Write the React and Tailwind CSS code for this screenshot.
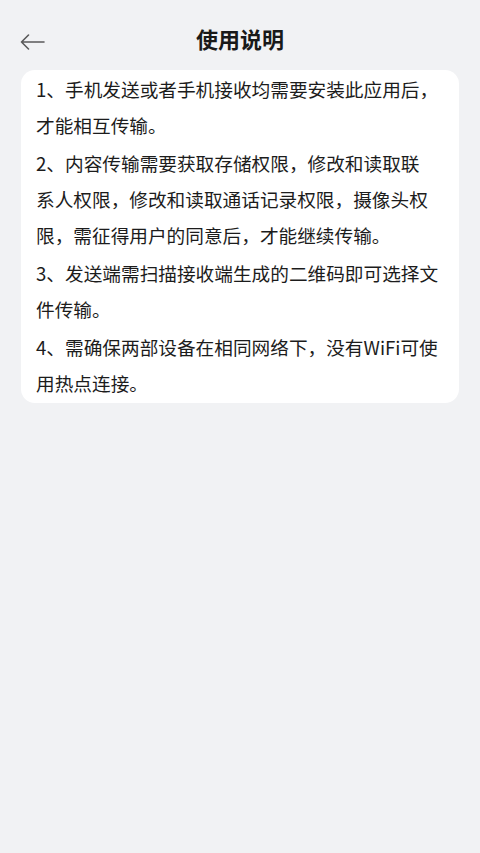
import React from "react";

const paragraphs = [
  ["1、手机发送或者手机接收均需要安装此应用后，", "才能相互传输。"],
  [
    "2、内容传输需要获取存储权限，修改和读取联",
    "系人权限，修改和读取通话记录权限，摄像头权",
    "限，需征得用户的同意后，才能继续传输。",
  ],
  ["3、发送端需扫描接收端生成的二维码即可选择文", "件传输。"],
  ["4、需确保两部设备在相同网络下，没有WiFi可使", "用热点连接。"],
];

export default function App() {
  return (
    <div
      className="min-h-[853px] w-[480px] bg-[#f1f2f4] pb-4"
      style={{ fontFamily: '"Noto Sans CJK SC", "Noto Sans", sans-serif' }}
    >
      <header className="grid grid-cols-[1fr_auto_1fr] items-center pt-[24px] h-[52px]">
        <div className="flex items-center pl-[20px]">
          <svg width="25" height="16" viewBox="0 0 25 16" fill="none" className="mt-[3px]">
            <path
              d="M24 8H1.5M8.5 1L1.5 8L8.5 15"
              stroke="#5a5a5a"
              strokeWidth="1.6"
              strokeLinecap="round"
              strokeLinejoin="round"
            />
          </svg>
        </div>
        <h1 className="mb-[4px] text-[22px] font-bold leading-[28px] text-[#191919]">使用说明</h1>
        <div />
      </header>
      <main className="mx-[21px] mt-[18px] rounded-[14px] bg-white px-[15px] pt-[1px] pb-[2px]">
        <div className="flex flex-col gap-[2px]">
          {paragraphs.map((lines, i) => (
            <p key={i} className="text-[18.67px] leading-[36px] text-[#1c1c1c]">
              {lines.map((l, j) => (
                <span key={j} className="block whitespace-nowrap">
                  {l}
                </span>
              ))}
            </p>
          ))}
        </div>
      </main>
    </div>
  );
}
